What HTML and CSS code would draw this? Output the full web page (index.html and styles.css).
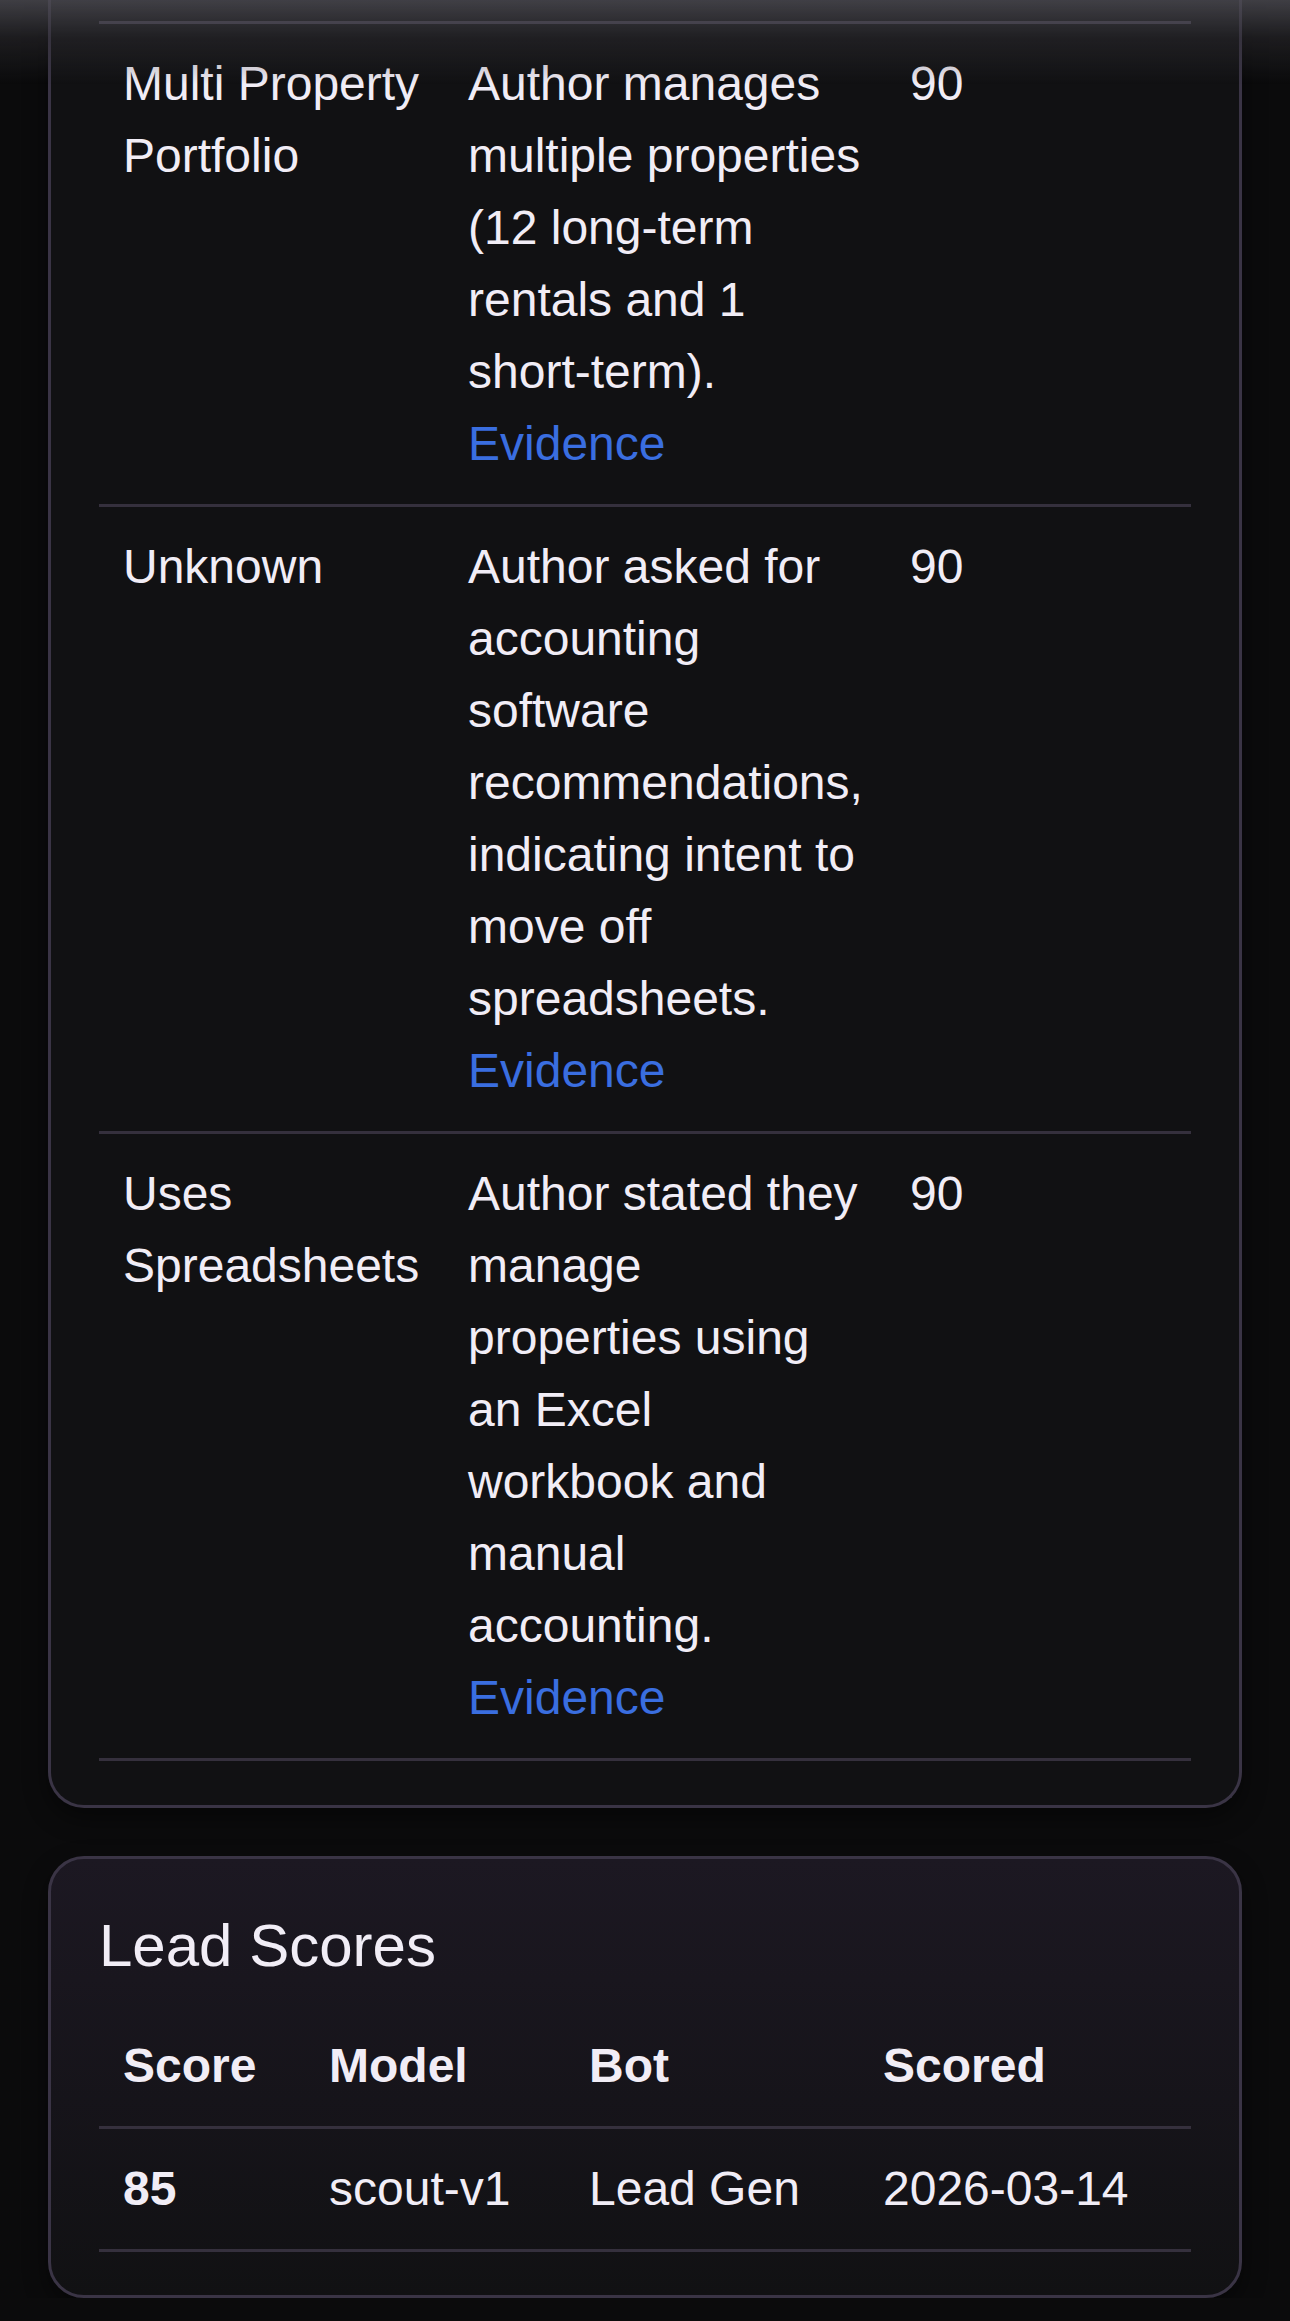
FILE: index.html
```html
<!DOCTYPE html>
<html lang="en">
<head>
<meta charset="utf-8">
<title>Lead details</title>
<link rel="stylesheet" href="styles.css">
</head>
<body>
<div class="top-fade"></div>
<main class="page">
  <section class="card card--clipped">
    <table class="data-table signals">
      <colgroup>
        <col class="c-signal">
        <col class="c-reason">
        <col class="c-conf">
      </colgroup>
      <tbody>
        <tr class="first-row">
          <td>Multi Property Portfolio</td>
          <td>Author manages multiple properties (12 long-term rentals and 1 short-term).<br><a class="evidence" href="#">Evidence</a></td>
          <td>90</td>
        </tr>
        <tr>
          <td>Unknown</td>
          <td>Author asked for accounting software recommendations, indicating intent to move off spreadsheets.<br><a class="evidence" href="#">Evidence</a></td>
          <td>90</td>
        </tr>
        <tr>
          <td>Uses Spreadsheets</td>
          <td>Author stated they manage properties using an Excel workbook and manual accounting.<br><a class="evidence" href="#">Evidence</a></td>
          <td>90</td>
        </tr>
      </tbody>
    </table>
  </section>

  <section class="card card--scores">
    <h2 class="card-title">Lead Scores</h2>
    <table class="data-table scores">
      <colgroup>
        <col class="c-score">
        <col class="c-model">
        <col class="c-bot">
        <col class="c-date">
      </colgroup>
      <thead>
        <tr>
          <th>Score</th>
          <th>Model</th>
          <th>Bot</th>
          <th>Scored</th>
        </tr>
      </thead>
      <tbody>
        <tr>
          <td class="strong">85</td>
          <td>scout-v1</td>
          <td>Lead Gen</td>
          <td>2026-03-14</td>
        </tr>
      </tbody>
    </table>
  </section>
</main>
</body>
</html>
```

FILE: styles.css
```css
html, body {
  margin: 0;
  padding: 0;
}

body {
  background: #0b0b0c;
  color: #f1edf6;
  font-family: "Liberation Sans", Arial, Helvetica, sans-serif;
  font-size: 48px;
  line-height: 72px;
}

.top-fade {
  position: fixed;
  top: 0;
  left: 0;
  right: 0;
  height: 84px;
  background: linear-gradient(to bottom, rgba(78, 77, 84, 0.78) 0%, rgba(50, 49, 54, 0.45) 45%, rgba(20, 20, 22, 0) 100%);
  pointer-events: none;
  z-index: 5;
}

.page {
  padding: 0 48px;
  display: flex;
  flex-direction: column;
  gap: 48px;
}

.card {
  border: 3px solid #3a3445;
  border-radius: 36px;
  padding: 48px 48px 44px;
  background: #111113;
  box-shadow: 0 10px 24px rgba(0, 0, 0, 0.45);
}

.card--clipped {
  border-top: 0;
  border-radius: 0 0 36px 36px;
  padding-top: 21px;
}

.card--scores {
  padding-top: 51px;
  padding-bottom: 43px;
  background: linear-gradient(to bottom, #1c1822 0%, #16141a 55%, #111113 100%);
}

.card-title {
  margin: 0 0 24px;
  font-size: 60px;
  line-height: 72px;
  font-weight: 400;
  color: #f1edf6;
}

.data-table {
  width: 100%;
  table-layout: fixed;
  border-collapse: separate;
  border-spacing: 0;
}

.data-table td,
.data-table th {
  padding: 24px;
  text-align: left;
  vertical-align: top;
  border-bottom: 3px solid #35303d;
}

.data-table th {
  font-weight: 700;
}

.signals .first-row td {
  border-top: 3px solid #4c4657;
}

.c-signal { width: 345px; }
.c-reason { width: 442px; }

.c-score { width: 206px; }
.c-model { width: 260px; }
.c-bot { width: 294px; }

.evidence {
  color: #3a6ee0;
  text-decoration: none;
}

.strong {
  font-weight: 700;
}
```
